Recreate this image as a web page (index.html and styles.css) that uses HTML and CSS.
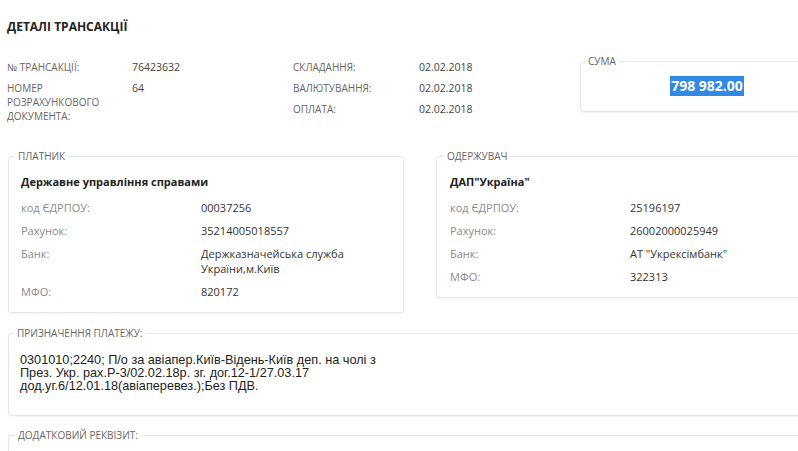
FILE: index.html
```html
<!DOCTYPE html>
<html lang="uk">
<head>
    <meta charset="UTF-8">
    <title>Деталі трансакції</title>
    <link rel="stylesheet" href="styles.css">
</head>
<body>
<div class="page">
    <h1 class="title">ДЕТАЛІ ТРАНСАКЦІЇ</h1>

    <div class="summary">
        <dl class="facts facts-main">
            <dt>№ ТРАНСАКЦІЇ:</dt>
            <dd>76423632</dd>
            <dt>НОМЕР РОЗРАХУНКОВОГО ДОКУМЕНТА:</dt>
            <dd>64</dd>
        </dl>
        <dl class="facts facts-dates">
            <dt>СКЛАДАННЯ:</dt>
            <dd>02.02.2018</dd>
            <dt>ВАЛЮТУВАННЯ:</dt>
            <dd>02.02.2018</dd>
            <dt>ОПЛАТА:</dt>
            <dd>02.02.2018</dd>
        </dl>
        <fieldset class="box sum">
            <legend>СУМА</legend>
            <span class="amount">798 982.00</span>
        </fieldset>
    </div>

    <div class="parties">
        <fieldset class="box party">
            <legend>ПЛАТНИК</legend>
            <div class="party-name">Державне управління справами</div>
            <dl class="details">
                <dt>код ЄДРПОУ:</dt>
                <dd>00037256</dd>
                <dt>Рахунок:</dt>
                <dd>35214005018557</dd>
                <dt>Банк:</dt>
                <dd>Держказначейська служба<br>України,м.Київ</dd>
                <dt>МФО:</dt>
                <dd>820172</dd>
            </dl>
        </fieldset>
        <fieldset class="box party">
            <legend>ОДЕРЖУВАЧ</legend>
            <div class="party-name">ДАП"Україна"</div>
            <dl class="details">
                <dt>код ЄДРПОУ:</dt>
                <dd>25196197</dd>
                <dt>Рахунок:</dt>
                <dd>26002000025949</dd>
                <dt>Банк:</dt>
                <dd>АТ "Укрексімбанк"</dd>
                <dt>МФО:</dt>
                <dd>322313</dd>
            </dl>
        </fieldset>
    </div>

    <fieldset class="box purpose">
        <legend>ПРИЗНАЧЕННЯ ПЛАТЕЖУ:</legend>
        <p>0301010;2240; П/о за авіапер.Київ-Відень-Київ деп. на чолі з<br>
        През. Укр. рах.Р-3/02.02.18р. зг. дог.12-1/27.03.17<br>
        дод.уг.6/12.01.18(авіаперевез.);Без ПДВ.</p>
    </fieldset>

    <fieldset class="box extra">
        <legend>ДОДАТКОВИЙ РЕКВІЗИТ:</legend>
    </fieldset>
</div>
</body>
</html>
```

FILE: styles.css
```css
html, body{
    margin: 0;
    background: #fff;
    overflow: hidden;
}
.page{
    width: 830px;
    padding: 19px 0 0 7px;
    font-family: "Open Sans", "Liberation Sans", sans-serif;
    color: #333;
}
.title{
    margin: 0;
    font-size: 12px;
    line-height: 16px;
    font-weight: 700;
    color: #222;
}

/* top facts */
.summary{
    display: flex;
    align-items: flex-start;
    margin-top: 20px;
}
.facts{
    display: grid;
    row-gap: 7px;
    margin: 5px 0 0;
    line-height: 14px;
}
.facts dt{
    font-size: 10px;
    color: #666;
}
.facts dd{
    margin: 0;
    font-size: 10.5px;
    color: #444;
}
.facts-main{
    width: 286px;
    grid-template-columns: 125px 1fr;
}
.facts-dates{
    width: 287px;
    grid-template-columns: 126px 1fr;
}

/* framed boxes */
.box{
    margin: 0;
    padding: 0 12px;
    border: 1px solid #e3e6ea;
    border-radius: 3px;
    box-shadow: 0 1px 2px rgba(0,0,0,.05);
    min-width: 0;
}
.box legend{
    padding: 0 3px;
    margin-left: -6px;
    font-size: 10px;
    line-height: 12px;
    color: #666;
}

.sum{
    width: 254px;
    height: 57px;
    box-sizing: border-box;
    text-align: center;
}
.sum legend{
    text-align: left;
    margin-left: -8px;
}
.amount{
    display: inline-block;
    margin-top: 9px;
    padding: 0 1px;
    font-size: 14px;
    line-height: 20px;
    font-weight: 700;
    color: #fff;
    background: #3089e3;
}

/* payer / receiver */
.parties{
    display: flex;
    align-items: flex-start;
    gap: 32px;
    margin: 27px 0 0 1px;
}
.party{
    width: 396px;
    box-sizing: border-box;
    padding: 12px 12px 13px;
}
.party + .party{
    width: 374px;
    padding-left: 13px;
}
.party-name{
    font-size: 11px;
    line-height: 16px;
    font-weight: 700;
    color: #222;
}
.details{
    display: grid;
    grid-template-columns: 180px 1fr;
    row-gap: 8px;
    margin: 10px 0 0;
    font-size: 11px;
    line-height: 15px;
}
.details dt{
    color: #8a8a8a;
}
.details dd{
    margin: 0;
    color: #333;
}

/* purpose */
.purpose{
    margin: 14px 0 0 1px;
    width: 820px;
    box-sizing: border-box;
    padding: 15px 11px 22px;
}
.purpose p{
    margin: 0;
    font-family: "Liberation Sans", Arial, sans-serif;
    font-size: 12.7px;
    line-height: 13px;
    color: #222;
}
.extra{
    margin: 13px 0 0 1px;
    width: 820px;
    height: 40px;
    box-sizing: border-box;
}
```
